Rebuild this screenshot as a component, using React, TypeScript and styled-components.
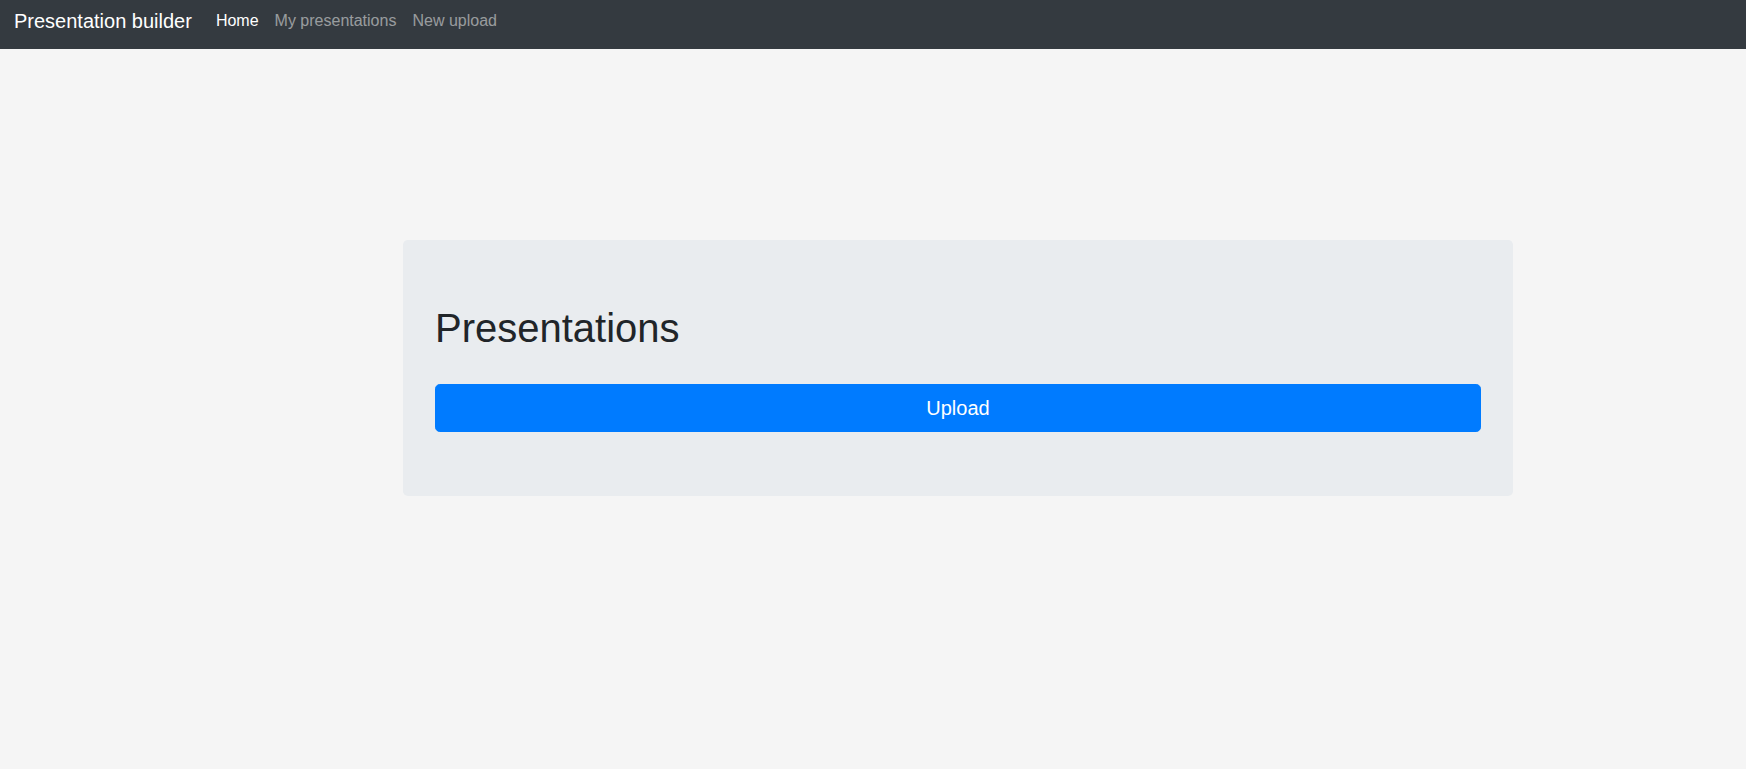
import React from 'react';
import styled, { createGlobalStyle } from 'styled-components';

const GlobalStyle = createGlobalStyle`
  html, body {
    margin: 0;
    padding: 0;
    background-color: #f5f5f5;
    font-family: "Liberation Sans", Arial, Helvetica, sans-serif;
    color: #212529;
  }
  * {
    box-sizing: border-box;
  }
`;

const Page = styled.div`
  min-height: 769px;
  background-color: #f5f5f5;
`;

// Top navigation bar
const Navbar = styled.nav`
  display: flex;
  align-items: flex-start;
  height: 49px;
  padding: 0 14px;
  background-color: #343a40;
`;

const Brand = styled.a`
  margin-top: 6px;
  margin-right: 16px;
  font-size: 20px;
  line-height: 30px;
  color: #fff;
  text-decoration: none;
  white-space: nowrap;
`;

const NavList = styled.ul`
  display: flex;
  margin: 1px 0 0;
  padding: 0;
  list-style: none;
`;

const NavLink = styled.a<{ $active?: boolean }>`
  display: block;
  padding: 8px;
  font-size: 16px;
  line-height: 24px;
  color: ${props => (props.$active ? '#fff' : 'rgba(255, 255, 255, 0.5)')};
  text-decoration: none;
  cursor: pointer;
`;

// Main content
const Main = styled.main`
  display: flex;
  padding: 191px 0 0 403px;
`;

const Jumbotron = styled.section`
  width: 1110px;
  padding: 64px 32px 64px;
  background-color: #e9ecef;
  border-radius: 4.8px;
`;

const Title = styled.h1`
  margin: 0 0 32px;
  font-size: 40px;
  font-weight: 500;
  line-height: 1.2;
  color: #212529;
`;

const UploadButton = styled.button`
  display: block;
  width: 100%;
  height: 48px;
  padding: 8px 16px;
  font-family: inherit;
  font-size: 20px;
  line-height: 30px;
  color: #fff;
  background-color: #007bff;
  border: 1px solid #007bff;
  border-radius: 4.8px;
  cursor: pointer;
`;

export default function App() {
  return (
    <Page>
      <GlobalStyle />
      <Navbar>
        <Brand>Presentation builder</Brand>
        <NavList>
          <li><NavLink $active>Home</NavLink></li>
          <li><NavLink>My presentations</NavLink></li>
          <li><NavLink>New upload</NavLink></li>
        </NavList>
      </Navbar>
      <Main>
        <Jumbotron>
          <Title>Presentations</Title>
          <UploadButton>Upload</UploadButton>
        </Jumbotron>
      </Main>
    </Page>
  );
}
